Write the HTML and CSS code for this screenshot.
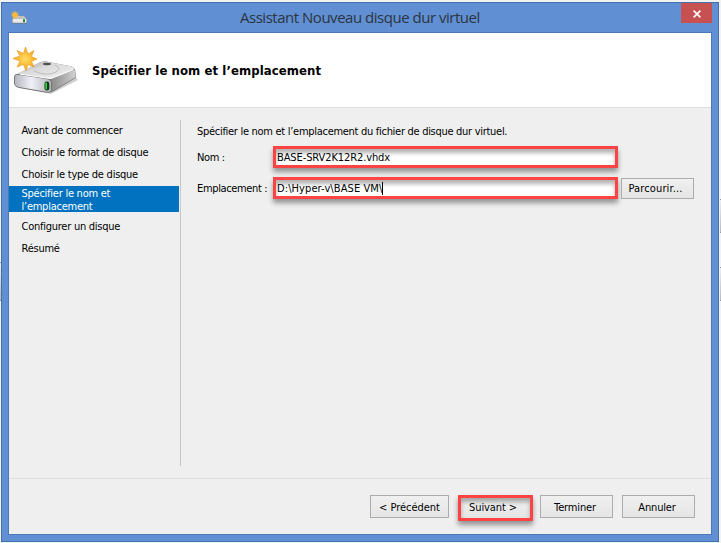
FILE: index.html
```
<!DOCTYPE html>
<html lang="fr">
<head>
<meta charset="utf-8">
<title>Assistant Nouveau disque dur virtuel</title>
<link rel="stylesheet" href="styles.css">
</head>
<body>
<svg width="0" height="0" class="defs">
  <defs>
    <linearGradient id="top" x1="0" y1="0" x2="1" y2="1"><stop offset="0" stop-color="#9c9c9c"/><stop offset=".4" stop-color="#dadada"/><stop offset="1" stop-color="#f2f2f2"/></linearGradient>
    <linearGradient id="front" x1="0" y1="0" x2="1" y2="0"><stop offset="0" stop-color="#b4b4bc"/><stop offset=".45" stop-color="#f0f0f8"/><stop offset="1" stop-color="#b4b4ba"/></linearGradient>
    <linearGradient id="side" x1="0" y1="0" x2="1" y2="0"><stop offset="0" stop-color="#8a8a8a"/><stop offset="1" stop-color="#d0d0d0"/></linearGradient>
    <radialGradient id="sun"><stop offset="0" stop-color="#ffdc61"/><stop offset="1" stop-color="#f6a51c"/></radialGradient>
    <symbol id="disk" viewBox="0 0 66 50">
      <path d="M4 40 L38 47 L65 33 L62 29 L40 43Z" fill="#777" opacity=".35"/>
      <path d="M1.500 30 L26 16 Q29 14 33 14.500 L59 19.500 Q63.500 21 62.500 31 L41 44 Q38 46 34 45.500 L6 40.500 Q1.500 39 1.500 35Z" fill="#777"/>
      <path d="M2.500 27.500 L26 15.500 Q29 14 33 14.500 L59 19.500 Q63 21 60 23 L39 32 L5 27.500Z" fill="url(#top)"/>
      <path d="M38 32 L61 22.500 Q63 24 62 30.500 L41 43 Q39 44.500 38 44.500Z" fill="url(#side)"/>
      <path d="M1.500 30 Q1.500 27 5 27.300 L33 31.500 Q38.500 32.500 38.500 36 V42 Q38.500 46 33.500 45.200 L6 40.500 Q1.500 39.500 1.500 36Z" fill="url(#front)" stroke="#707070" stroke-width=".9"/>
      <ellipse cx="34" cy="17" rx="4" ry="1.200" fill="#505050"/>
      <path d="M21 24 Q34 30 43 25 Q49 21 42 18" fill="none" stroke="#b8b8b8" stroke-width=".9"/>
      <path d="M7 27.200 L37 31.600 Q48 28 60 22.500" fill="none" stroke="#fff" stroke-width="1"/>
      <rect x="31.500" y="34.500" width="4.800" height="9" rx="2.200" fill="#123b18"/>
      <rect x="32.400" y="35.500" width="1.600" height="7" rx=".8" fill="#35dc3c"/>
      <path d="M12.500 0 L15 7 L21 3.500 L18.500 9.500 L24 12 L18.500 14.500 L21 20 L15 17.500 L13 24 L10.500 17.500 L4 20 L7 14 L0 11.500 L7 9 L4 3.500 L10.500 6.500Z" fill="url(#sun)" stroke="#e9961b" stroke-width=".6"/>
    </symbol>
  </defs>
</svg>
<div class="edge left"></div><div class="edge right upper"></div><div class="edge right lower"></div>
<div class="window">
  <header class="titlebar">
    <svg class="app-icon" viewBox="0 0 17 15"><path d="M1 9 L4 6 H13 L16 9 V13.500 H1Z" fill="#73777d"/><path d="M2.500 8 L4.500 6 H13 L15 8.500 H2Z" fill="#c4bfbd"/><rect x="1.500" y="8.500" width="14" height="4.300" rx=".5" fill="#ebe9eb"/><rect x="12" y="9.200" width="2" height="3" fill="#238b35"/><path d="M4 .5 L4.900 2.800 L7 2 L6.200 4.100 L8.500 5 L6.200 5.900 L7 8 L4.900 7.200 L4 9.500 L3.100 7.200 L1 8 L1.800 5.900 L0 5 L1.800 4.100 L1 2 L3.100 2.800Z" fill="#f9b93c"/></svg>
    <h1>Assistant Nouveau disque dur virtuel</h1>
    <button class="close" aria-label="Fermer"><svg viewBox="0 0 8 8"><path d="M.6 .6 L7.400 7.400 M7.400 .6 L.6 7.400" stroke="#fff" stroke-width="1.700"/></svg></button>
  </header>
  <main class="client">
    <section class="banner">
      <svg class="banner-icon"><use href="#disk"/></svg>
      <h2>Spécifier le nom et l’emplacement</h2>
    </section>
    <section class="body">
      <nav class="steps">
        <a>Avant de commencer</a>
        <a>Choisir le format de disque</a>
        <a>Choisir le type de disque</a>
        <a class="current">Spécifier le nom et<br>l’emplacement</a>
        <a>Configurer un disque</a>
        <a>Résumé</a>
      </nav>
      <form class="form">
        <p>Spécifier le nom et l’emplacement du fichier de disque dur virtuel.</p>
        <div class="row"><label>Nom :</label><div class="field mark">BASE-SRV2K12R2.vhdx</div></div>
        <div class="row"><label>Emplacement :</label><div class="field path mark">D:\Hyper-v\BASE VM\<i class="caret"></i></div><button type="button" class="btn browse">Parcourir...</button></div>
      </form>
    </section>
    <footer class="actions">
      <button class="btn prev">&lt; Précédent</button>
      <button class="btn next mark">Suivant &gt;</button>
      <button class="btn">Terminer</button>
      <button class="btn">Annuler</button>
    </footer>
  </main>
</div>
</body>
</html>
```
FILE: styles.css
```
* { box-sizing: border-box; }
body { margin: 0; width: 721px; height: 543px; padding: 2px 2px 1px 1px; overflow: hidden; background: #f2f2f2;
  font: 11px/13px "DejaVu Sans Condensed", "DejaVu Sans", sans-serif; letter-spacing: -.29px; color: #000; }
.defs { position: absolute; }
.edge { position: absolute; width: 1px; border: solid #999; border-width: 1px 0; background: linear-gradient(#eee, #bbb); }
.left { left: 0; top: 262px; height: 39px; }
.right { left: 720px; }
.upper { top: 199px; height: 34px; }
.lower { top: 267px; height: 34px; }
h1, h2, p { margin: 0; font-weight: normal; }
.window { width: 718px; height: 540px; border: 1px solid #426fae; background: #608fd3; }
.titlebar { height: 29px; display: flex; align-items: flex-start; }
.app-icon { width: 17px; height: 15px; margin: 7px 0 0 9px; }
h1 { flex: 1; padding: 4px 0 0 212px; font: 15px/20px "Open Sans", sans-serif; letter-spacing: -.48px; color: #2c3540; white-space: nowrap; }
.close { width: 31px; height: 20px; margin-right: 6px; border: 0; padding: 1px 0 0 1px; background: #c75050; display: flex; align-items: center; justify-content: center; }
.close svg { width: 8px; height: 8px; }
.client { margin: 0 6px; width: 704px; height: 503px; border: 1px solid #4c78b8; background: #efefef; display: flex; flex-direction: column; }
.banner { height: 75px; background: #fff; border-bottom: 1px solid #dedede; display: flex; }
.banner-icon { width: 66px; height: 50px; margin: 14px 0 0 4px; }
h2 { margin: 30px 0 0 13px; font-weight: bold; font-size: 13px; line-height: 16px; letter-spacing: .08px; white-space: nowrap; }
.body { height: 371px; padding-top: 12px; border-bottom: 1px solid #dedede; display: flex; align-items: flex-start; }
.steps { width: 172px; height: 346px; border-right: 1px solid #c8c8c8; padding-top: 4px; white-space: nowrap; letter-spacing: -.25px; }
.steps a { display: block; height: 13px; padding-left: 12.5px; margin-bottom: 9px; }
.steps .current { height: 26px; width: 170px; margin: -4px 0 8px; padding-top: 1px; background: #0072c0; color: #fff; }
.form { flex: 1; padding: 5px 0 0 16px; white-space: nowrap; }
.row { display: flex; align-items: center; height: 22px; margin-top: 8px; }
.row + .row { margin-top: 9px; }
.row label { width: 76px; letter-spacing: -.35px; }
.mark { border: 3px solid #fd4343; box-shadow: 0 4px 5px rgba(0,0,0,.38), inset 0 4px 4px rgba(0,0,0,.3); }
.field { width: 345px; height: 22px; background: #fff; padding: 1px 0 0 1px; line-height: 16px; letter-spacing: -.1px; display: flex; align-items: center; }
.path { letter-spacing: .09px; }
.caret { width: 1px; height: 13px; background: #000; }
.btn { font: inherit; letter-spacing: -.15px; color: #000; height: 23px; width: 73px; padding: 1px 3px 0 0; border: 1px solid #acacac; background: linear-gradient(#f0f0f0, #e5e5e5); white-space: nowrap; }
.browse { height: 21px; margin-left: 3px; padding-right: 4px; letter-spacing: .15px; }
.actions { flex: 1; display: flex; padding: 16px 16px 0 0; justify-content: flex-end; gap: 9px; }
.prev { width: 79px; padding-right: 0; letter-spacing: -.03px; }
.actions .next { width: 75px; height: 26px; border: 3px solid #fd4343; margin-right: -2px; padding: 0 5px 2px 0; letter-spacing: -.1px; }
```
